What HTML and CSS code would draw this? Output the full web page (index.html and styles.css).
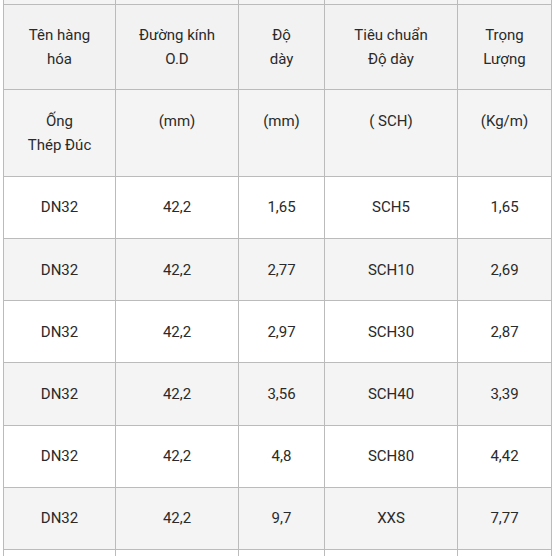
FILE: index.html
```html
<!DOCTYPE html>
<html lang="vi">
<head>
<meta charset="utf-8">
<link rel="stylesheet" href="styles.css">
</head>
<body>
<table class="spec">
  <colgroup>
    <col class="c1"><col class="c2"><col class="c3"><col class="c4"><col class="c5">
  </colgroup>
  <tbody>
    <tr class="spacer gray"><td></td><td></td><td></td><td></td><td></td></tr>
    <tr class="head">
      <td>Tên hàng<br>hóa</td>
      <td>Đường kính<br>O.D</td>
      <td>Độ<br>dày</td>
      <td>Tiêu chuẩn<br>Độ dày</td>
      <td>Trọng<br>Lượng</td>
    </tr>
    <tr class="unit">
      <td>Ống<br>Thép Đúc</td>
      <td>(mm)</td>
      <td>(mm)</td>
      <td>( SCH)</td>
      <td>(Kg/m)</td>
    </tr>
    <tr><td>DN32</td><td>42,2</td><td>1,65</td><td>SCH5</td><td>1,65</td></tr>
    <tr class="gray"><td>DN32</td><td>42,2</td><td>2,77</td><td>SCH10</td><td>2,69</td></tr>
    <tr><td>DN32</td><td>42,2</td><td>2,97</td><td>SCH30</td><td>2,87</td></tr>
    <tr class="gray"><td>DN32</td><td>42,2</td><td>3,56</td><td>SCH40</td><td>3,39</td></tr>
    <tr><td>DN32</td><td>42,2</td><td>4,8</td><td>SCH80</td><td>4,42</td></tr>
    <tr class="gray"><td>DN32</td><td>42,2</td><td>9,7</td><td>XXS</td><td>7,77</td></tr>
    <tr class="spacer end"><td></td><td></td><td></td><td></td><td></td></tr>
  </tbody>
</table>
</body>
</html>
```
FILE: styles.css
```css
html, body {
  margin: 0;
  padding: 0;
  background: #ffffff;
  overflow: hidden;
}
.spec {
  margin-left: 3px;
  width: 548px;
  table-layout: fixed;
  border-collapse: collapse;
  font-family: Roboto, "Liberation Sans", Arial, sans-serif;
  font-size: 15px;
  line-height: 24.2px;
  color: #2a2a2a;
}
.c1 { width: 112px; }
.c2 { width: 123px; }
.c3 { width: 86px; }
.c4 { width: 133px; }
.c5 { width: 94px; }
.spec td {
  border: 1px solid #bbbbbb;
  padding: 18.5px 6px;
  text-align: center;
  vertical-align: top;
}
.spec .gray td { background: #f4f4f4; }
.spec .head td { background: #f2f2f2; padding-top: 18px; padding-bottom: 18px; }
.spec .unit td { background: #f4f4f4; }
.spec .spacer td {
  padding: 0;
  line-height: 0;
  height: 4px;
  border-top: hidden;
}
.spec .spacer.end td {
  height: 20px;
  border-top: 1px solid #bbbbbb;
  border-bottom: hidden;
  background: #ffffff;
}
```
